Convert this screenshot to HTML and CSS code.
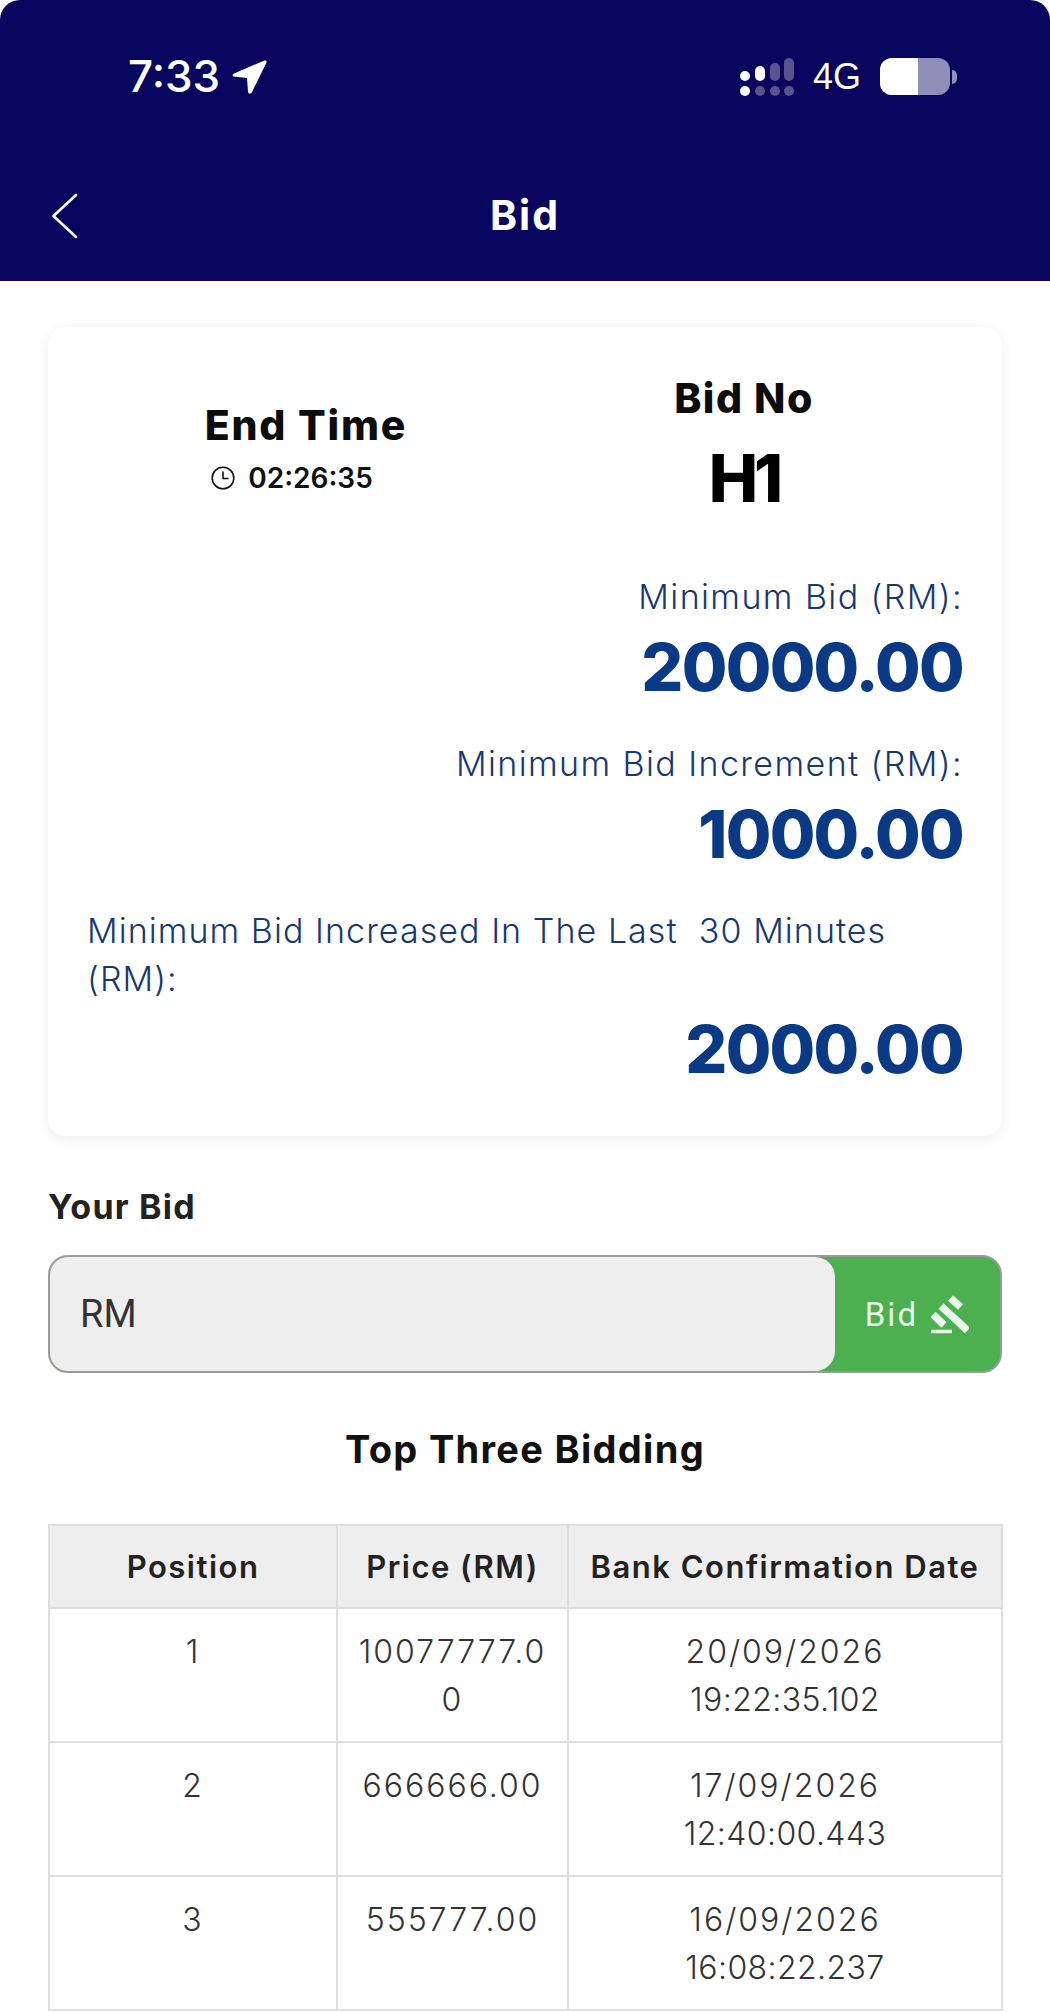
FILE: index.html
```html
<!DOCTYPE html>
<html lang="en">
<head>
<meta charset="utf-8">
<title>Bid</title>
<link rel="stylesheet" href="styles.css">
</head>
<body>
<header class="app-header">
  <div class="status-bar">
    <div class="status-left">
      <span class="clock">7:33</span>
      <svg class="loc" viewBox="0 0 36 36"><path d="M32.5 1.5 L2 14.5 Q-0.5 16 1.5 17.5 L15 19 L16 33 Q17 36 19.5 34 L34.5 3.5 Q35 1 32.5 1.5 Z" fill="#fff"/></svg>
    </div>
    <div class="status-right">
      <svg class="signal" viewBox="0 0 54 38">
        <rect x="0" y="13" width="10" height="10" rx="5" fill="#fff"/>
        <rect x="15" y="8" width="10" height="15" rx="5" fill="#fff"/>
        <rect x="30" y="5" width="10" height="18" rx="5" fill="#55558f"/>
        <rect x="44" y="0" width="10" height="23" rx="5" fill="#55558f"/>
        <circle cx="5" cy="33" r="5" fill="#fff"/>
        <circle cx="20" cy="33" r="5" fill="#55558f"/>
        <circle cx="35" cy="33" r="5" fill="#55558f"/>
        <circle cx="49" cy="33" r="5" fill="#55558f"/>
      </svg>
      <span class="net">4G</span>
      <div class="battery"><div class="battery-body"><div class="battery-fill"></div></div><div class="battery-cap"></div></div>
    </div>
  </div>
  <div class="nav-bar">
    <svg class="back" viewBox="0 0 26 46"><path d="M24 2 L1.5 23 L24 44" fill="none" stroke="#fff" stroke-width="2.6" stroke-linecap="round" stroke-linejoin="round"/></svg>
    <h1 class="nav-title">Bid</h1>
  </div>
</header>
<main class="content">
  <section class="card">
    <div class="card-top">
      <div class="end-col">
        <div class="end-title">End Time</div>
        <div class="timer">
          <svg class="timer-icon" viewBox="0 0 24 24"><circle cx="12" cy="12" r="10.8" fill="none" stroke="#111" stroke-width="1.6"/><path d="M12 5.5 V12.5 H17.5" fill="none" stroke="#111" stroke-width="1.6"/></svg>
          <span>02:26:35</span>
        </div>
      </div>
      <div class="no-col">
        <div class="no-title">Bid No</div>
        <div class="no-value">H1</div>
      </div>
    </div>
    <div class="stat">
      <div class="stat-label">Minimum Bid (RM):</div>
      <div class="stat-value">20000.00</div>
    </div>
    <div class="stat">
      <div class="stat-label">Minimum Bid Increment (RM):</div>
      <div class="stat-value">1000.00</div>
    </div>
    <div class="stat">
      <div class="stat-label stat-label-left">Minimum Bid Increased In The Last&nbsp; 30 Minutes (RM):</div>
      <div class="stat-value">2000.00</div>
    </div>
  </section>
  <div class="your-bid">Your Bid</div>
  <div class="bid-form">
    <div class="bid-input">RM</div>
    <div class="bid-button">
      <span>Bid</span>
      <svg class="gavel" viewBox="0 0 38 40" fill="none" stroke="#e9f6ea">
        <path d="M19.5 4 L29.5 13" stroke-width="7.5"/>
        <path d="M10 12 L36.5 36.5" stroke-width="7.5"/>
        <path d="M2 20.5 L13 31" stroke-width="7.5"/>
        <path d="M0 37.5 H21" stroke-width="3.4"/>
      </svg>
    </div>
  </div>
  <h2 class="top-title">Top Three Bidding</h2>
  <table class="bids">
    <colgroup><col class="col-a"><col class="col-b"><col class="col-c"></colgroup>
    <thead>
      <tr><th>Position</th><th>Price (RM)</th><th>Bank Confirmation Date</th></tr>
    </thead>
    <tbody>
      <tr><td>1</td><td class="price">10077777.00</td><td><span class="date">20/09/2026</span><br><span class="time">19:22:35.102</span></td></tr>
      <tr><td>2</td><td class="price">666666.00</td><td><span class="date">17/09/2026</span><br><span class="time">12:40:00.443</span></td></tr>
      <tr><td>3</td><td class="price">555777.00</td><td><span class="date">16/09/2026</span><br><span class="time">16:08:22.237</span></td></tr>
    </tbody>
  </table>
</main>
</body>
</html>
```
FILE: styles.css
```css
* { box-sizing: border-box; }
html, body { margin: 0; padding: 0; background: #fff; }
body { width: 1050px; height: 2012px; overflow: hidden; font-family: Inter, "Liberation Sans", sans-serif; color: #111; }

.app-header { height: 281px; background: #07055e; border-radius: 20px 20px 0 0; padding-top: 58px; color: #fff; }
.status-bar { height: 37px; display: flex; justify-content: space-between; padding: 0 93px 0 128px; }
.status-left { display: flex; align-items: center; gap: 12px; }
.clock { font-size: 44px; line-height: 37px; font-weight: 500; }
.loc { width: 36px; height: 36px; }
.status-right { display: flex; align-items: center; }
.signal { width: 54px; height: 38px; margin-right: 19px; }
.net { font-size: 36px; line-height: 37px; font-family: "Liberation Sans", sans-serif; margin-right: 19px; }
.battery { display: flex; align-items: center; gap: 2px; }
.battery-body { width: 70px; height: 37px; border-radius: 12px; background: #8e8eb9; overflow: hidden; }
.battery-fill { width: 38px; height: 100%; background: #fff; }
.battery-cap { width: 5px; height: 14px; border-radius: 0 6px 6px 0; background: #8e8eb9; }

.nav-bar { position: relative; height: 44px; margin-top: 98px; display: flex; justify-content: center; align-items: center; }
.back { position: absolute; left: 52px; top: 0; width: 26px; height: 46px; }
.nav-title { margin: 0; font-size: 41px; line-height: 44px; font-weight: 700; letter-spacing: 2px; }

.content { padding: 46px 48px 0; }
.card { background: #fff; border-radius: 18px; padding: 45px 39px 41px; box-shadow: 0 3px 14px rgba(0, 0, 0, 0.07); }
.card-top { display: grid; grid-template-columns: 1fr 1fr; text-align: center; margin-bottom: 47px; }
.end-col { padding-top: 28px; }
.end-title { font-size: 41px; line-height: 50px; font-weight: 800; letter-spacing: 1.8px; color: #0c0c0c; }
.timer { display: flex; justify-content: center; align-items: center; gap: 13px; height: 56px; font-size: 28px; font-weight: 600; color: #111; padding-right: 28px; }
.timer-icon { width: 24px; height: 24px; }
.no-title { font-size: 41px; line-height: 52px; font-weight: 800; letter-spacing: 1.5px; color: #0c0c0c; }
.no-value { margin-top: 6px; font-size: 66px; line-height: 96px; height: 96px; font-weight: 800; letter-spacing: -4px; color: #000; }

.stat { margin-bottom: 27px; text-align: right; }
.stat:last-child { margin-bottom: 0; }
.stat-label { font-size: 34px; line-height: 48px; font-weight: 300; letter-spacing: 1.4px; color: #17396f; }
.stat-label-left { text-align: left; letter-spacing: 1.05px; }
.stat-value { font-size: 66px; line-height: 92px; font-weight: 800; letter-spacing: -1.7px; color: #0a3a85; }

.your-bid { margin-top: 46px; font-size: 34px; line-height: 50px; font-weight: 700; letter-spacing: 1.2px; color: #222; }
.bid-form { margin-top: 23px; height: 118px; display: flex; border: 2px solid #9a9a9a; border-radius: 20px; background: #4caf50; overflow: hidden; }
.bid-input { width: 785px; background: #eee; border-radius: 0 20px 20px 0; padding-left: 30px; font-family: Roboto, sans-serif; font-size: 38px; line-height: 114px; color: #333; }
.bid-button { flex: 1; display: flex; align-items: center; justify-content: flex-end; gap: 13px; padding-right: 31px; color: #e9f6ea; font-size: 33px; letter-spacing: 2px; font-family: Roboto, sans-serif; }
.gavel { width: 38px; height: 40px; }

.top-title { margin: 46px 0 45px; text-align: center; font-size: 38px; line-height: 60px; font-weight: 700; letter-spacing: 1.3px; color: #111; }

.bids { width: 953px; border-collapse: collapse; table-layout: fixed; font-size: 32px; }
.col-a { width: 288px; }
.col-b { width: 231px; }
.col-c { width: 434px; }
.bids th, .bids td { border: 2.5px solid #dedede; text-align: center; padding: 0 16px; }
.bids th { height: 83px; background: #eee; font-size: 31px; font-weight: 600; letter-spacing: 1.5px; color: #222; padding: 0 8px; }
.bids td { height: 134px; vertical-align: top; padding-top: 19px; padding-bottom: 17px; line-height: 48px; font-weight: 300; letter-spacing: 2px; color: #333; }
.price { word-break: break-all; }
.date { letter-spacing: 2px; }
.time { letter-spacing: 0.4px; }
```
